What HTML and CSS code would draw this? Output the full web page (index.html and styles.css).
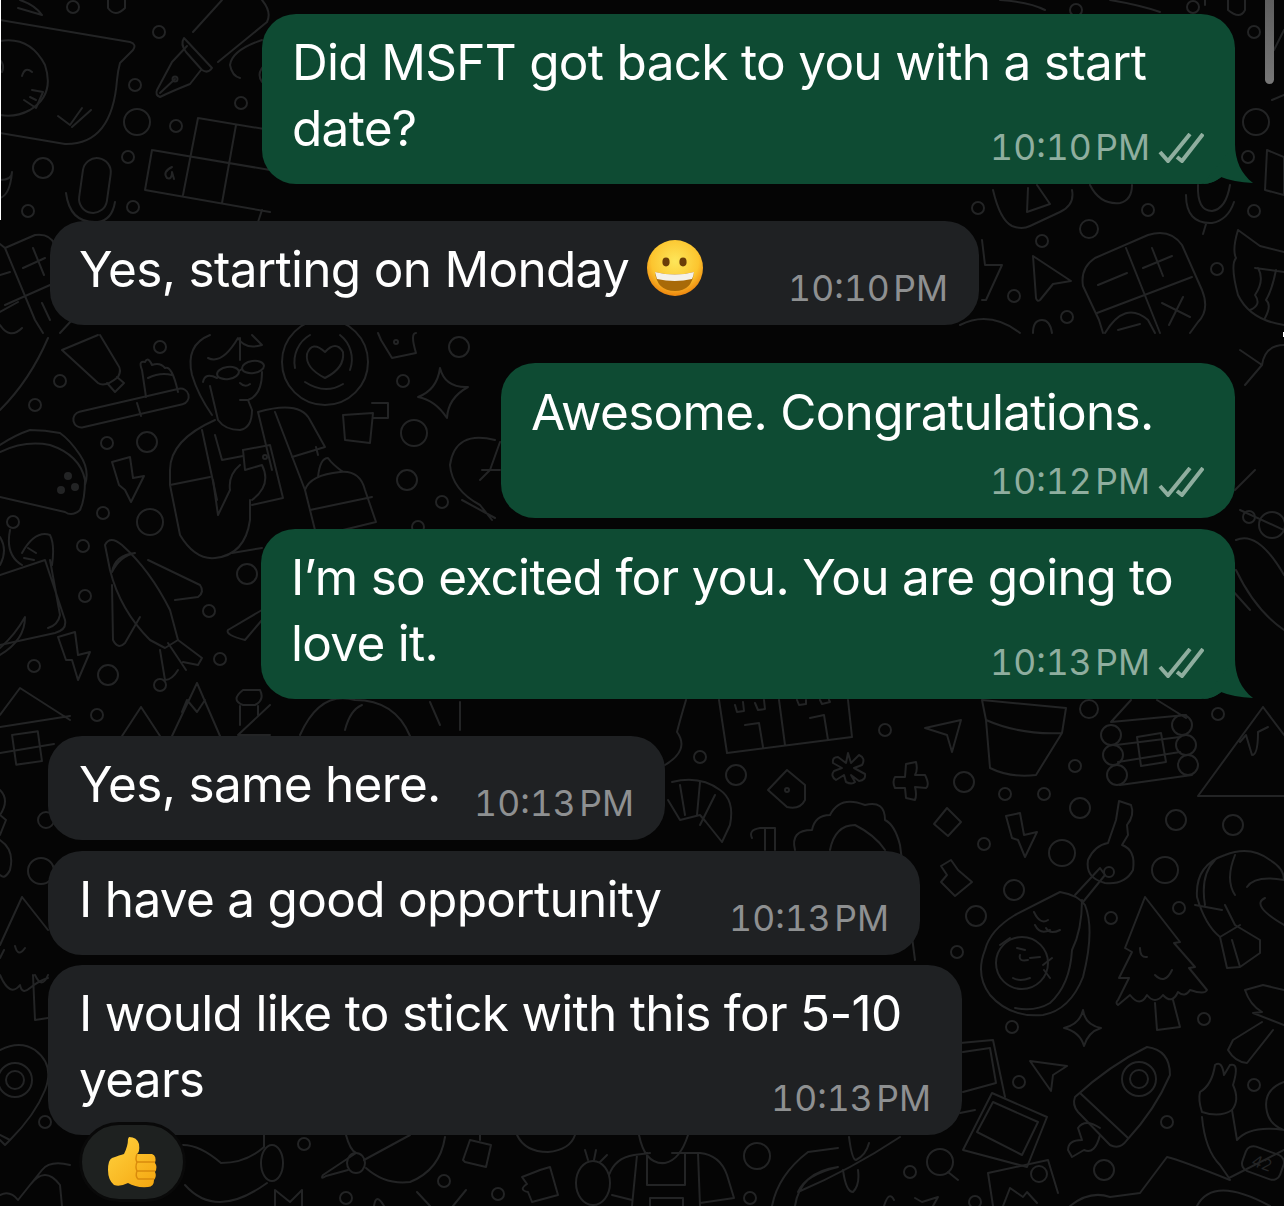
FILE: index.html
```html
<!DOCTYPE html>
<html lang="en">
<head>
<meta charset="utf-8">
<title>Chat</title>
<link rel="stylesheet" href="styles.css">
</head>
<body>
<svg class="wallpaper" viewBox="0 0 1284 1206" aria-hidden="true">
  <g class="doodle">
    <!-- top left -->
    <path d="M0 20L130 42Q137 44 133 50L120 63Q118 70 117 80Q112 145 65 144L0 133"/>
    <path d="M0 41Q30 36 45 65Q55 95 30 110Q15 118 0 115"/>
    <path d="M0 60Q5 65 2 72M22 76Q25 66 32 72"/>
    <path d="M24 100L36 108L43 92L32 90M30 97L36 100"/>
    <path d="M58 116L70 125L82 108M72 127L91 110"/>
    <path d="M193 32L222 0M218 62L267 22Q272 12 262 0"/>
    <path d="M184 38L212 68Q208 74 202 70L186 52Q180 44 184 38Z"/>
    <path d="M187 46L172 62L157 90Q155 95 160 97Q170 92 190 84L201 70M160 93L175 79"/>
    <circle cx="175" cy="79" r="2.5"/>
    <path d="M262 40Q232 50 230 65Q232 76 240 78M268 62Q255 72 262 82"/>
    <path d="M152 150L270 170M145 190L270 212M198 118L270 130M198 118L183 195M236 125L222 203M152 150L145 190M262 210L258 222"/>
    <path d="M172 167Q162 172 167 178Q172 180 172 172L174 179"/>
    <rect x="81" y="158" width="28" height="55" rx="14" transform="rotate(8 95 185)"/>
    <path d="M66 193Q70 224 98 222Q112 220 115 202"/>
    <path d="M0 180Q12 180 12 172M0 198Q10 195 12 172"/>
    <path d="M20 0Q35 5 42 15L18 8M108 0V8Q115 18 125 8V0"/>
    <circle cx="73" cy="7" r="6"/><circle cx="159" cy="32" r="6"/><circle cx="135" cy="85" r="6"/><circle cx="137" cy="122" r="13"/><circle cx="176" cy="126" r="6"/><circle cx="128" cy="157" r="6"/><circle cx="43" cy="168" r="10"/><circle cx="241" cy="103" r="6"/><circle cx="28" cy="211" r="6"/><circle cx="133" cy="207" r="6"/>
    <!-- top right -->
    <path d="M1000 0Q1030 2 1045 10M1110 0Q1140 5 1160 12M1228 0V10Q1240 20 1245 10V0M1205 5V0"/>
    <circle cx="1193" cy="7" r="6"/><circle cx="1076" cy="10" r="6"/><circle cx="1254" cy="32" r="6"/><circle cx="1256" cy="122" r="13"/><circle cx="1248" cy="157" r="6"/><circle cx="1254" cy="211" r="6"/>
    <path d="M1267 150L1284 157V195L1265 190ZM1274 50L1284 30M1272 100L1284 95"/>
    <path d="M993 190Q1000 220 1012 226Q1022 230 1030 226L1060 212Q1075 205 1072 190M1028 188L1027 212L1050 204L1037 185"/>
    <path d="M1090 185Q1100 205 1120 203Q1132 200 1132 185"/>
    <path d="M1186 195Q1186 224 1212 223Q1228 220 1234 202M1198 185Q1197 211 1212 211Q1226 209 1230 185M1206 224L1203 234"/>
    <path d="M982 240L985 265L1002 265L986 300L982 300"/>
    <path d="M1033 256L1071 281L1053 284L1040 300Q1037 302 1036 298Z"/>
    <path d="M1103 333L1099 320L1083 286Q1080 268 1095 258L1148 235Q1170 228 1182 245L1202 290Q1210 310 1198 322L1190 333"/>
    <path d="M1126 248L1160 333M1097 313L1192 277M1143 268L1172 256M1152 248L1163 276M1098 285L1127 273M1162 303L1190 317M1169 325L1183 297M1105 333Q1125 300 1148 320L1155 333M1118 330L1140 324"/>
    <path d="M1238 230Q1232 250 1236 258Q1230 265 1238 295Q1250 320 1284 325M1238 230L1260 246L1284 252M1255 268L1284 272M1258 268Q1265 280 1255 295Q1262 305 1250 310M1276 270Q1272 290 1266 300Q1272 305 1265 318"/>
    <circle cx="978" cy="208" r="6"/><circle cx="1148" cy="210" r="6"/><circle cx="1089" cy="229" r="9"/><circle cx="1042" cy="241" r="6"/><circle cx="1014" cy="296" r="6"/><circle cx="1217" cy="269" r="6"/><circle cx="1067" cy="317" r="6"/>
    <path d="M1033 333Q1033 320 1042 320Q1050 320 1052 333M960 325Q990 310 1020 333"/>
    <!-- middle left -->
    <path d="M0 244L5 248L35 235Q50 233 55 245M5 248L35 320L43 333M5 305L50 285M23 268L45 258M33 248L44 275M0 275L10 272"/>
    <path d="M0 312L18 302M0 325Q10 340 22 328M42 303L50 320M60 333L72 320"/>
    <path d="M48 338Q30 380 0 410"/>
    <path d="M62 350L98 383Q105 388 118 377Q122 370 118 365L100 335M62 350L98 335"/>
    <path d="M107 383L115 392L124 383L117 377"/>
    <rect x="72" y="400" width="118" height="16" rx="8" transform="rotate(-13 131 408)"/>
    <path d="M137 403L141 416M146 397L142 370Q138 360 145 362Q148 356 152 365Q160 362 165 368Q172 365 178 392M148 378Q160 372 172 375"/>
    <path d="M210 335Q185 345 192 375Q198 395 212 415"/>
    <path d="M208 358Q222 365 238 338Q245 350 262 345L252 335M240 360V338"/>
    <ellipse cx="228" cy="373" rx="11" ry="6" transform="rotate(-8 228 373)"/>
    <ellipse cx="253" cy="367" rx="11" ry="6" transform="rotate(-8 253 367)"/>
    <path d="M203 382Q205 372 217 378M239 371L242 369M240 383Q245 388 250 384M262 372Q262 395 248 400H240M210 386L218 420Q225 430 240 430Q252 428 252 410L248 400"/>
    <path d="M215 420Q170 440 170 470V485L180 535Q195 560 215 558Q245 555 250 520V500M170 485L210 477M202 430L217 500"/>
    <path d="M258 412Q300 400 310 420L325 447L292 457M275 412L305 490L315 530M258 412L272 470"/>
    <path d="M215 435L222 460L243 456M243 450L270 445L283 498L252 505"/>
    <path d="M243 450L245 470L262 465Q272 485 252 500M240 465Q228 475 230 490L218 515L213 480"/>
    <circle cx="265" cy="457" r="2"/>
    <path d="M232 553L262 548M305 490Q310 475 340 472Q360 470 365 490L376 522L310 538M310 510L372 497M318 477Q320 458 328 458Q332 464 343 472M318 455L316 447"/>
    <circle cx="325" cy="362" r="43"/>
    <path d="M295 368A31 31 0 0 1 310 335M340 335A31 31 0 0 1 350 370M305 382Q325 395 343 384M325 352Q312 340 307 354Q305 368 325 378Q345 368 343 352Q336 340 325 352"/>
    <path d="M343 415L373 413L370 443L345 440ZM372 403L388 403L388 418L373 418"/>
    <path d="M381 340L392 358L416 353Q410 333 416 333M381 340L378 333"/>
    <circle cx="396" cy="342" r="2"/>
    <path d="M440 368Q445 388 468 387Q448 398 447 418Q435 400 418 397Q437 390 440 368Z"/>
    <path d="M462 500L495 518M500 442L490 470L480 480M495 440Q455 430 450 465Q452 490 480 505L492 520M482 470H500"/>
    <path d="M0 452Q25 440 50 445Q80 455 85 480Q85 500 80 510Q72 517 65 512L0 497M0 445Q15 435 30 430Q45 430 60 433Q70 440 80 455Q90 470 85 485"/>
    <g class="solid"><circle cx="68" cy="476" r="3"/><circle cx="61" cy="490" r="3"/><circle cx="75" cy="487" r="3"/></g>
    <path d="M112 462L130 457L133 478L144 476L131 502L125 490L119 485Z"/>
    <path d="M58 637L75 632L78 655L90 652L78 680L72 660L66 660Z"/>
    <path d="M0 575L45 560L65 620Q67 630 55 633L0 645M50 560L60 615Q58 625 48 628M22 553Q35 530 50 535Q55 545 52 565M28 548L36 553M24 558L34 560M0 537Q8 550 0 565M10 530Q5 555 22 565"/>
    <path d="M0 648Q15 635 25 617Q25 640 0 655"/>
    <path d="M105 545Q110 535 122 545Q150 570 170 610L178 640L165 648L150 640Q120 610 110 570Z"/>
    <path d="M112 572Q115 555 135 553Q120 556 112 572ZM148 560L200 585Q205 592 198 597L175 600M112 585L113 640Q118 650 125 643L140 617M160 650L165 680Q172 680 178 670M178 640L202 658L198 665L183 662M168 643L186 670"/>
    <path d="M228 630L262 610M228 630Q225 635 245 640L262 620"/>
    <circle cx="60" cy="381" r="6"/><circle cx="35" cy="405" r="6"/><circle cx="107" cy="443" r="6"/><circle cx="147" cy="442" r="10"/><circle cx="103" cy="513" r="6"/><circle cx="150" cy="522" r="13"/><circle cx="13" cy="522" r="6"/><circle cx="83" cy="546" r="6"/><circle cx="85" cy="596" r="6"/><circle cx="108" cy="675" r="10"/><circle cx="34" cy="666" r="6"/><circle cx="247" cy="574" r="10"/><circle cx="209" cy="611" r="6"/><circle cx="220" cy="659" r="6"/><circle cx="160" cy="685" r="6"/><circle cx="97" cy="715" r="6"/><circle cx="459" cy="347" r="10"/><circle cx="403" cy="381" r="6"/><circle cx="414" cy="433" r="13"/><circle cx="407" cy="480" r="10"/><circle cx="442" cy="502" r="6"/><circle cx="418" cy="527" r="6"/><circle cx="160" cy="347" r="6"/>
    <!-- right of middle -->
    <path d="M1284 345Q1265 345 1262 365M1240 350L1262 365L1245 385M1255 470L1235 490M1240 510L1284 530"/>
    <path d="M1250 610L1232 590M1236 540Q1258 530 1284 575M1236 570Q1255 610 1284 630"/>
    <circle cx="1272" cy="525" r="13"/><circle cx="1249" cy="517" r="6"/>
    <!-- band above left bubbles -->
    <path d="M0 715L20 688L70 720M0 727L70 716M0 753L54 744"/>
    <rect x="14" y="733" width="26" height="30" transform="rotate(-8 27 748)"/>
    <path d="M141 707L122 736M141 707L160 736M197 683L172 736M197 683L220 736M182 712L187 700L197 712L205 700M270 735L238 735L270 705M243 690H260Q265 700 255 705H243Q230 700 243 690ZM240 706V725M258 706V715"/>
    <path d="M300 735Q320 690 355 700Q395 700 410 736M362 705Q350 710 345 730M430 702L440 725M460 702V730"/>
    <!-- mid band right -->
    <path d="M719 700L727 753L852 737L848 700M779 700L785 745M745 725L759 723L763 747M810 718L824 715L828 740M735 705L737 712L744 711L743 702M755 703L758 710L765 709L764 700M797 700L799 705L806 704V700M820 700L822 704L830 702L829 700"/>
    <path d="M686 700Q680 720 677 732Q690 750 665 765"/>
    <path d="M848 753L851 763L859 755Q866 758 862 765L854 768L865 774Q866 780 859 781L851 775L855 782Q852 785 846 782L844 775L836 780Q830 776 834 771L842 768L833 763Q832 757 838 757L846 763Z"/>
    <path d="M906 764L916 762Q918 770 915 775L925 775Q930 785 926 788L915 787Q917 795 915 800L906 798L905 788L895 788Q892 782 895 777L905 777Z"/>
    <path d="M925 728L961 720L952 752L947 735Z"/>
    <path d="M982 700L1066 708L1062 733L1036 775Q1010 778 990 768L986 720ZM986 720Q1020 735 1062 733"/>
    <path d="M1111 722L1131 700M1157 700L1186 718M1111 722L1186 715M1116 745L1180 737M1120 785L1192 775M1118 762L1180 752M1137 737L1161 733L1166 762L1141 766Z"/>
    <circle cx="1111" cy="735" r="10"/><circle cx="1113" cy="755" r="10"/><circle cx="1117" cy="775" r="10"/><circle cx="1182" cy="725" r="10"/><circle cx="1186" cy="745" r="10"/><circle cx="1188" cy="765" r="10"/>
    <path d="M1263 707L1198 796H1284M1263 707L1284 735M1240 742L1246 735L1252 755Q1258 755 1258 732L1268 727"/>
    <path d="M787 770L768 790L787 807Q800 810 805 800L805 785Z"/>
    <circle cx="787" cy="790" r="2"/>
    <path d="M947 808L934 824L948 836L961 822Z"/>
    <path d="M1006 816L1020 813L1024 835L1037 832L1025 857L1018 840L1012 838Z"/>
    <path d="M941 866L951 860L958 870L972 882L955 896L941 882L947 875Z"/>
    <path d="M1119 801L1131 805Q1135 815 1127 825L1128 835L1122 845Q1136 850 1133 870Q1125 885 1105 883Q1085 878 1088 860Q1095 845 1108 843L1116 820Z"/>
    <path d="M1075 895L1100 868L1105 875L1083 902"/>
    <circle cx="1109" cy="872" r="5"/>
    <path d="M672 782Q700 775 720 790Q735 800 730 825L722 842L706 822L700 815L680 820L668 800"/>
    <path d="M680 785L685 815M700 782L697 815M715 795L700 825"/>
    <path d="M752 838Q748 830 760 828H775V850M765 828V850"/>
    <path d="M795 850Q790 830 812 830Q815 815 830 815Q840 795 865 805Q885 800 885 820Q895 825 900 845L915 960M830 850Q835 825 855 825Q875 835 885 850"/>
    <!-- avocado, tree, shrimp -->
    <path d="M1060 892Q1078 895 1085 905Q1095 930 1083 977Q1070 1010 1043 1015Q1010 1018 990 995Q975 975 985 950Q990 930 1015 915Z"/>
    <path d="M1082 900Q1082 930 1072 950Q1070 985 1050 1003Q1035 1012 1015 1008"/>
    <circle cx="1022" cy="963" r="26"/>
    <path d="M1000 945L1010 938M1017 948L1025 950M1020 955Q1018 962 1028 960M1030 958L1040 957M1013 978Q1020 982 1030 978M1043 965L1052 958M1044 970L1050 978M1034 912Q1040 925 1048 920M1035 925Q1040 935 1050 930M1046 928Q1050 935 1060 930"/>
    <path d="M1145 897L1180 942L1174 943L1195 967L1189 968L1207 990Q1205 995 1190 990Q1185 998 1178 992Q1172 1005 1163 995Q1155 1005 1147 995Q1140 1008 1130 995L1118 1005Q1115 1003 1118 1000L1129 978H1119L1132 952L1125 948Z"/>
    <path d="M1140 948Q1140 958 1147 957M1155 975Q1165 985 1172 970M1155 1003L1157 1030L1180 1027L1173 1000"/>
    <path d="M1197 897Q1195 865 1225 855Q1250 845 1270 860Q1284 868 1284 880M1197 897Q1205 925 1220 937L1227 968L1240 967L1260 953V940L1235 925Q1230 915 1225 905M1215 860Q1200 875 1205 905M1235 855Q1225 880 1235 895M1222 910L1195 905M1247 887Q1255 875 1284 880M1265 898Q1250 905 1284 925M1220 937L1240 925M1232 940L1240 967"/>
    <path d="M1245 990L1263 985L1284 990M1245 990Q1250 1005 1262 1012L1253 1013L1284 1025M1273 1030L1247 1063Q1235 1062 1228 1050L1233 1040L1262 1022"/>
    <path d="M1083 1010Q1085 1025 1101 1028Q1088 1032 1084 1046Q1080 1032 1064 1028Q1080 1024 1083 1010Z"/>
    <path d="M1030 1061L1067 1066L1053 1075L1051 1091Z"/>
    <path d="M1075 1097Q1110 1065 1147 1047Q1170 1050 1170 1075Q1155 1110 1127 1140Q1120 1150 1110 1145L1078 1112Q1072 1105 1075 1097Z"/>
    <path d="M1080 1093L1128 1138"/>
    <circle cx="1139" cy="1079" r="17"/><circle cx="1139" cy="1079" r="9"/>
    <path d="M1100 1128Q1085 1118 1078 1128L1082 1140Q1068 1140 1068 1150L1072 1157L1084 1150Q1095 1155 1100 1135"/>
    <path d="M1200 1092Q1212 1085 1215 1065Q1222 1060 1224 1075L1230 1065Q1240 1062 1233 1085Q1240 1100 1232 1110Q1220 1118 1202 1112Q1198 1100 1200 1092Z"/>
    <path d="M1202 1117Q1205 1150 1220 1165L1229 1178L1284 1150M1232 1110L1237 1140Q1250 1125 1284 1130M1284 1082Q1262 1090 1267 1112Q1270 1125 1284 1130"/>
    <rect x="1243" y="1150" width="40" height="26" rx="8" transform="rotate(20 1263 1163)"/>
    <text class="tag" x="1252" y="1169" transform="rotate(20 1263 1163)">42</text>
    <path d="M960 1043L993 1040L1005 1097M963 1052L990 1048L996 1083L963 1092M960 1113L975 1110"/>
    <path d="M963 1150L992 1093L1047 1117L1027 1167Z"/>
    <path d="M977 1132L993 1102L1038 1122L1022 1155Z"/>
    <path d="M988 1173L1048 1160L1058 1193M993 1206L988 1173M1003 1206L1010 1188L1023 1197L1027 1192L1037 1203"/>
    <path d="M1070 1206Q1090 1190 1110 1197L1140 1193L1167 1157Q1180 1160 1230 1180M1197 1206Q1213 1175 1270 1206"/>
    <circle cx="1039" cy="1174" r="8"/><circle cx="1104" cy="1170" r="10"/><circle cx="1167" cy="1122" r="6"/><circle cx="1254" cy="1085" r="6"/><circle cx="1019" cy="1082" r="6"/><circle cx="1012" cy="1027" r="6"/><circle cx="1204" cy="1019" r="6"/><circle cx="975" cy="1202" r="6"/><circle cx="1179" cy="908" r="6"/><circle cx="1111" cy="918" r="6"/>
    <circle cx="1089" cy="709" r="9"/><circle cx="1218" cy="714" r="6"/><circle cx="1075" cy="766" r="6"/><circle cx="885" cy="730" r="6"/><circle cx="700" cy="757" r="6"/><circle cx="736" cy="775" r="10"/><circle cx="964" cy="782" r="10"/><circle cx="1005" cy="794" r="6"/><circle cx="1044" cy="794" r="6"/><circle cx="1080" cy="808" r="10"/><circle cx="1176" cy="820" r="10"/><circle cx="1233" cy="825" r="10"/><circle cx="984" cy="844" r="6"/><circle cx="1062" cy="853" r="13"/><circle cx="1165" cy="870" r="13"/><circle cx="1014" cy="890" r="10"/><circle cx="976" cy="916" r="10"/><circle cx="957" cy="952" r="6"/>
    <!-- left lower -->
    <path d="M0 790Q10 800 0 815L6 820L0 835M0 840Q15 850 10 870Q5 880 0 875"/>
    <circle cx="41" cy="871" r="13"/><circle cx="46" cy="820" r="8"/>
    <path d="M22 897L0 945M22 897L48 930M4 950L0 958M15 946Q18 958 25 948M0 975Q10 998 20 985Q22 995 30 988Q40 980 48 978M33 975L35 1020L48 1018M35 975Q42 990 48 975"/>
    <path d="M0 1050Q20 1040 35 1050Q55 1065 45 1090Q35 1115 10 1140L5 1145L0 1140M0 1135L10 1140"/>
    <circle cx="15" cy="1080" r="17"/><circle cx="15" cy="1080" r="9"/><circle cx="45" cy="1122" r="6"/>
    <path d="M0 1195Q10 1190 18 1200L42 1170Q50 1160 70 1165M30 1185Q45 1165 60 1185L62 1206"/>
    <!-- bottom -->
    <path d="M183 1145Q200 1145 221 1163Q246 1163 264 1147V1135M185 1185Q216 1220 267 1183M275 1206V1190L290 1202L302 1190V1206"/>
    <ellipse cx="272" cy="1163" rx="11" ry="18"/>
    <ellipse cx="356" cy="1163" rx="9" ry="10"/>
    <path d="M346 1135Q350 1150 356 1153L323 1175Q320 1180 326 1176L348 1170M364 1160L410 1135M366 1168Q385 1185 410 1182Q440 1170 445 1137"/>
    <path d="M463 1160L470 1140L491 1145L486 1167L465 1162ZM480 1135V1140"/>
    <path d="M517 1135Q525 1152 548 1152Q570 1150 575 1135"/>
    <path d="M522 1177L535 1172L540 1170L550 1167L558 1195L532 1202L528 1192Q518 1190 527 1184Z"/>
    <path d="M374 1206Q376 1192 384 1206M417 1192L430 1206M466 1190L453 1206"/>
    <ellipse cx="593" cy="1183" rx="17" ry="22"/>
    <path d="M588 1160L585 1150M594 1160L596 1150M600 1162L607 1155"/>
    <path d="M609 1175Q615 1158 634 1155L650 1153M672 1153L700 1153Q720 1155 727 1175L734 1198L700 1203M637 1155L632 1206M698 1153L700 1206M647 1153V1185H685V1153M650 1206V1198H683V1206M639 1135Q645 1165 665 1163Q680 1160 688 1135M612 1195L632 1200"/>
    <path d="M772 1206Q778 1175 808 1152L838 1148L808 1152M795 1206Q800 1172 838 1167Q805 1175 798 1192Q850 1170 900 1137M849 1137Q852 1160 856 1160Q866 1155 869 1143M843 1170Q846 1192 853 1192Q860 1185 858 1170"/>
    <circle cx="940" cy="1162" r="13"/>
    <path d="M948 1172L958 1180M884 1206Q889 1190 894 1200M915 1198L922 1202L938 1197L933 1206"/>
    <circle cx="304" cy="1144" r="6"/><circle cx="346" cy="1198" r="6"/><circle cx="444" cy="1181" r="6"/><circle cx="498" cy="1194" r="6"/><circle cx="750" cy="1198" r="6"/><circle cx="910" cy="1172" r="6"/><circle cx="757" cy="1156" r="13"/>
  </g>
</svg>
<div class="edge-left"></div>
<div class="edge-right"></div>
<div class="scroll-thumb"></div>
<main class="chat">
  <article class="msg out w-973">
    <p class="text">Did MSFT got back to you with a start date?</p>
    <div class="meta"><span class="time">10:10 PM</span><svg class="ticks" viewBox="0 0 46 30"><path d="M2 19L10 28L32 1M19 24L24 28L45 1"/></svg></div>
    <svg class="tail" viewBox="0 0 50 40"><path d="M32 0C32 16 38 30 50 39Q30 38 18 33Q10 40 0 40Z"/></svg>
  </article>
  <article class="msg in w-929 gap-l">
    <p class="text">Yes, starting on Monday<svg class="smile" viewBox="0 0 58 58"><defs><radialGradient id="face" cx="50%" cy="38%" r="60%"><stop offset="0" stop-color="#fde65a"/><stop offset=".7" stop-color="#fcc52f"/><stop offset="1" stop-color="#ee8a10"/></radialGradient></defs><circle cx="29" cy="29" r="28" fill="url(#face)"/><ellipse cx="20" cy="23" rx="3.6" ry="4.4" fill="#6b3d08"/><ellipse cx="37" cy="23" rx="3.6" ry="4.4" fill="#6b3d08"/><path d="M9 33Q29 38 48 33Q46 52 29 52Q11 52 9 33Z" fill="#a86a08"/><path d="M9 33Q29 38 48 33Q47.500 37 46 40Q29 44 11 40Q10 37 9 33Z" fill="#f4f1ea"/></svg></p>
    <div class="meta"><span class="time">10:10 PM</span></div>
  </article>
  <article class="msg out w-734 stacked gap-m">
    <p class="text">Awesome. Congratulations.</p>
    <div class="meta"><span class="time">10:12 PM</span><svg class="ticks" viewBox="0 0 46 30"><path d="M2 19L10 28L32 1M19 24L24 28L45 1"/></svg></div>
  </article>
  <article class="msg out w-974 gap-s">
    <p class="text">I’m so excited for you. You are going to love it.</p>
    <div class="meta"><span class="time">10:13 PM</span><svg class="ticks" viewBox="0 0 46 30"><path d="M2 19L10 28L32 1M19 24L24 28L45 1"/></svg></div>
    <svg class="tail" viewBox="0 0 50 40"><path d="M32 0C32 16 38 30 50 39Q30 38 18 33Q10 40 0 40Z"/></svg>
  </article>
  <article class="msg in w-617 gap-l">
    <p class="text">Yes, same here.</p>
    <div class="meta"><span class="time">10:13 PM</span></div>
  </article>
  <article class="msg in w-872 gap-s">
    <p class="text">I have a good opportunity</p>
    <div class="meta"><span class="time">10:13 PM</span></div>
  </article>
  <article class="msg in w-914 gap-xs">
    <p class="text">I would like to stick with this for 5-10 years</p>
    <div class="meta"><span class="time">10:13 PM</span></div>
  </article>
  <div class="reaction"><svg class="thumb" viewBox="0 0 50 52"><defs><linearGradient id="th" x1="0" y1="0" x2="1" y2="1"><stop offset="0" stop-color="#ffd23f"/><stop offset="1" stop-color="#f5a60f"/></linearGradient></defs><path d="M21 1Q29 1 31 8Q32 16 29 18H44Q49 20 47 27Q50 31 47 36Q49 40 46 44Q46 51 40 51Q28 52 20 47Q12 51 6 49Q0 44 0 34Q0 24 4 22Q12 19 16 18Q20 10 20 3Z" fill="url(#th)"/><path d="M29 18Q27 23 29 26H47M29 26Q27 31 29 35H47M29 35Q27 40 30 43H46" fill="none" stroke="#d98a0c" stroke-width="1.4"/></svg></div>
</main>
</body>
</html>
```
FILE: styles.css
```css
* { box-sizing: border-box; }
html, body { margin: 0; height: 100%; }
body {
  position: relative;
  width: 1284px;
  height: 1206px;
  overflow: hidden;
  background: #050505;
  font-family: Inter, "Liberation Sans", sans-serif;
  color: #fff;
}
.wallpaper { position: absolute; inset: 0; width: 1284px; height: 1206px; }
.doodle { fill: none; stroke: #232425; stroke-width: 2; stroke-linecap: round; stroke-linejoin: round; }
.doodle .solid { fill: #232425; }
.tag { fill: #232425; stroke: none; font-size: 16px; font-family: Inter, sans-serif; }
.edge-left { position: absolute; left: 0; top: 0; width: 1px; height: 220px; background: #fff; }
.edge-right { position: absolute; right: 0; top: 332px; width: 1px; height: 5px; background: #fff; }
.scroll-thumb {
  position: absolute; top: 0; left: 1265px; width: 9px; height: 84px;
  border-radius: 0 0 5px 5px;
  background: linear-gradient(#5f5f5f, #777);
}
.chat {
  position: relative;
  display: flex;
  flex-direction: column;
  padding: 14px 49px 0 48px;
}
.msg {
  position: relative;
  display: grid;
  padding: 15px 31px 23px;
  border-radius: 34px;
  font-size: 49.5px;
  line-height: 66px;
}
.msg .text { grid-area: 1 / 1; margin: 0; letter-spacing: -0.7px; }
.msg .meta {
  grid-area: 1 / 1;
  align-self: end;
  justify-self: end;
  display: flex;
  align-items: center;
  gap: 8px;
  margin-bottom: -5px;
  height: 36px;
  font-size: 35.5px;
  line-height: 36px;
  font-variant-numeric: tabular-nums;
  letter-spacing: 0;
  word-spacing: -6px;
}
.stacked { padding-top: 16px; padding-bottom: 22px; grid-template-rows: 66px 51px; }
.stacked .meta { grid-area: 2 / 1; margin-bottom: -4px; }
.out { align-self: flex-end; background: #0e4b33; padding-left: 30px; }
.out .time { color: #8fae9f; }
.in { align-self: flex-start; background: #1f2123; }
.in .time { color: #8e9091; }
.w-973 { width: 973px; }
.w-974 { width: 974px; }
.w-734 { width: 734px; }
.w-929 { width: 929px; margin-left: 2px; padding-left: 29px; }
.w-617 { width: 617px; }
.w-872 { width: 872px; }
.w-914 { width: 914px; }
.gap-l { margin-top: 37px; }
.gap-m { margin-top: 38px; }
.gap-s { margin-top: 11px; }
.gap-xs { margin-top: 10px; }
.ticks { width: 46px; height: 30px; fill: none; stroke: #8fae9f; stroke-width: 4; }
.tail { position: absolute; right: -18px; bottom: 0; width: 50px; height: 40px; fill: #0e4b33; }
.smile { display: inline-block; width: 58px; height: 58px; margin-left: 17px; vertical-align: -10px; }
.reaction {
  display: flex;
  align-items: center;
  justify-content: center;
  width: 107px;
  height: 80px;
  margin: -13px 0 0 31px;
  position: relative;
  background: #1e2120;
  border: 3px solid #090909;
  border-radius: 40px;
}
.thumb { width: 50px; height: 52px; }
```
